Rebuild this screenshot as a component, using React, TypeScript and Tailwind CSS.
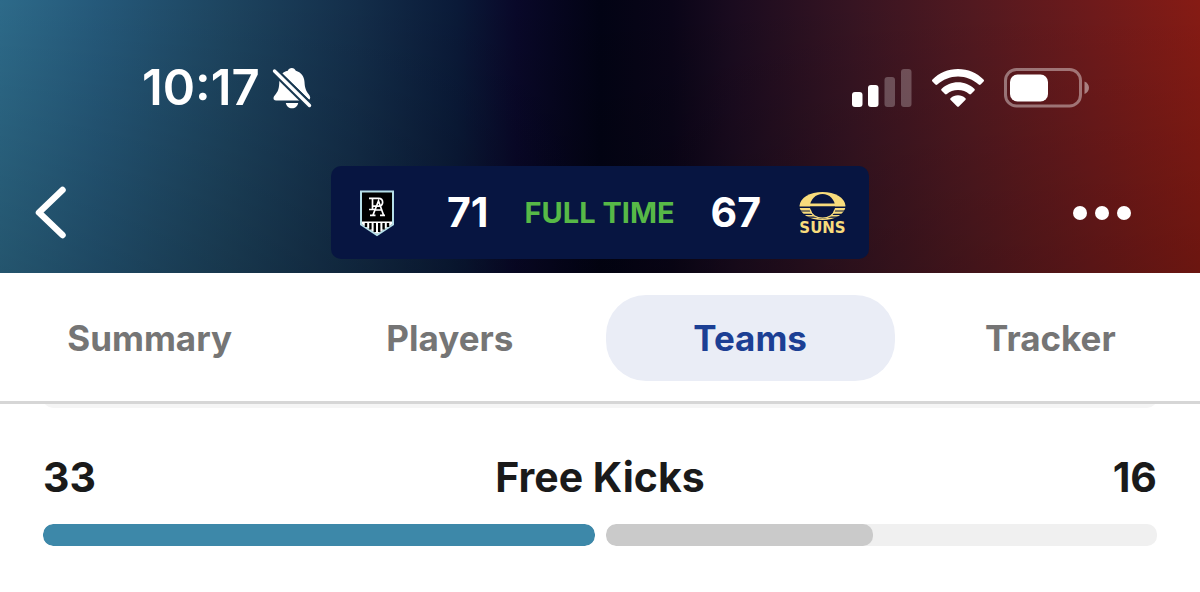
import React, { useState } from 'react';

interface StatRowProps {
  label: string;
  home: number;
  away: number;
}

const TABS = ['Summary', 'Players', 'Teams', 'Tracker'];

const BellOffIcon = () => (
  <svg viewBox="0 0 40 42" className="w-10 h-[42px]" fill="#fff" aria-hidden="true">
    <path d="M10.200 6.500C12.500 4.800 14.500 4.200 15.800 3.800C16.500 2 18 1 19.800 1s3.300 1.100 4 2.800c5.200 1.500 8.400 5.400 8.700 11.200c.3 6 1.500 8.800 4.200 12.200c.8 1 1.300 2 1.500 3.300c0 1-.3 1.700-1 2.200z" />
    <path d="M7.300 11.300L28.800 33.400H4C2.300 33.400 1.500 32.500 1.500 31.200c0-1.600 1.200-2.800 2.500-4.400c2.400-3 3.200-6.300 3.300-12z" />
    <path d="M13.800 36h12.400c-.4 3-3 5.300-6.200 5.300s-5.800-2.300-6.200-5.300z" />
    <path d="M3 4.500L37.500 38.500" stroke="#173851" strokeWidth="7.500" />
    <path d="M2.500 4L37.500 38.500" stroke="#fff" strokeWidth="3.400" strokeLinecap="round" />
  </svg>
);

const SignalIcon = () => (
  <svg viewBox="0 0 60 38" className="w-[60px] h-[38px]" fill="#fff" aria-label="Signal">
    <rect x="0" y="23" width="10.500" height="15" rx="3" />
    <rect x="16" y="16" width="10.500" height="22" rx="3" />
    <rect x="32.500" y="8" width="10.500" height="30" rx="3" opacity="0.250" />
    <rect x="49" y="0" width="10.500" height="38" rx="3" opacity="0.250" />
  </svg>
);

const WifiIcon = () => (
  <svg viewBox="0 0 52 38" className="w-[52px] h-[38px]" fill="#fff" aria-label="Wi-Fi">
    <path d="M26 0C36 0 45 4 51.500 10.500c.7.7.7 1.300.1 2l-3 3.100c-.6.6-1.200.6-1.900 0C41 10.600 34 7.500 26 7.500S11 10.600 5.300 15.600c-.7.6-1.300.6-1.900 0l-3-3.100c-.6-.7-.6-1.300.1-2C7 4 16 0 26 0z" />
    <path d="M26 13.300c6.300 0 12 2.400 16.300 6.500c.7.7.7 1.300 0 2l-3.300 3.300c-.6.6-1.200.6-1.900 0C34.200 22.500 30.400 21 26 21s-8.200 1.500-11.100 4.100c-.7.6-1.300.6-1.900 0l-3.300-3.300c-.7-.7-.7-1.300 0-2C14 15.700 19.700 13.300 26 13.300z" />
    <path d="M26 26.300c2.800 0 5.200 1 7.200 2.600c.8.700.8 1.300.1 2l-6.200 6.400c-.7.700-1.500.7-2.200 0l-6.200-6.400c-.7-.7-.7-1.300.1-2c2-1.600 4.400-2.600 7.200-2.600z" />
  </svg>
);

const BatteryIcon = () => (
  <svg viewBox="0 0 86 40" className="w-[86px] h-10" aria-label="Battery">
    <rect x="1.500" y="1.500" width="75" height="36.500" rx="11" fill="none" stroke="#fff" strokeOpacity="0.400" strokeWidth="3" />
    <rect x="6" y="6.500" width="38" height="27" rx="7.500" fill="#fff" />
    <path d="M80.500 13.500c2.700 1 4.500 3.500 4.500 6.300s-1.800 5.300-4.500 6.300z" fill="#fff" fillOpacity="0.450" />
  </svg>
);

const PortAdelaideLogo = () => (
  <svg viewBox="0 0 36 48" className="w-9 h-12" aria-label="Port Adelaide">
    <path d="M2 2.500h32v33L18 46L2 35.500z" fill="#000" stroke="#b5dfe8" strokeWidth="2" />
    <path d="M3 32.500h30v2.800L18 45L3 35.300z" fill="#fff" />
    <path d="M7 34v4M11.400 34v6.500M15.800 34v9M20.200 34v9M24.600 34v6.500M29 34v4" stroke="#000" strokeWidth="2.400" />
    <g fill="none" stroke="#fff" strokeWidth="1.700">
      <path d="M10 9.300h9.500c5.500 0 5.500 7.800 0 7.800H13M13.500 9.300v11M10 20.500h6" />
      <path d="M14 26L19.500 12l5 14M16 21h7M11 26.300h5.500M21 26.300h5" />
    </g>
  </svg>
);

const SunsLogo = () => (
  <svg viewBox="0 0 52 44" className="w-[52px] h-11 overflow-visible" aria-label="Gold Coast Suns">
    <ellipse cx="25.500" cy="15" rx="23" ry="14" fill="#f8dc7c" />
    <circle cx="25.500" cy="15.500" r="12.500" fill="#071541" />
    <path d="M13 12.500h25v3H13z" fill="#f8dc7c" />
    <path d="M2 16.200h47" stroke="#071541" strokeWidth="1.400" />
    <path d="M2 20h11.500M37.500 20H49M4 23.300h12M35 23.300h12M8 26.200h12M31 26.200h12" stroke="#071541" strokeWidth="1.200" />
    <path d="M13.200 18.500c2 11.500 22.600 11.500 24.600 0" fill="none" stroke="#f8dc7c" strokeWidth="1.200" />
    <text x="25.500" y="42" textAnchor="middle" fill="#f8dc7c" fontFamily="DejaVu Sans, sans-serif" fontSize="15" fontWeight="700">SUNS</text>
  </svg>
);

const StatRow: React.FC<StatRowProps> = ({ label, home, away }) => {
  const max = Math.max(home, away);

  return (
    <section className="px-[43px] pt-[43px]">
      <div className="grid grid-cols-[1fr_auto_1fr] items-center text-[41px] leading-[52px] font-bold text-[#1a1a1a]">
        <span>{home}</span>
        <h2>{label}</h2>
        <span className="text-right">{away}</span>
      </div>
      <div className="mt-[21px] grid grid-cols-2 gap-[11px]">
        <div className="flex justify-end h-[22px] rounded-[10px] bg-[#f0f0f0] overflow-hidden">
          <div className="rounded-[10px] bg-[#3d88a9]" style={{ width: `${(home / max) * 100}%` }}></div>
        </div>
        <div className="h-[22px] rounded-[10px] bg-[#f0f0f0] overflow-hidden">
          <div className="h-full rounded-[10px] bg-[#cacaca]" style={{ width: `${(away / max) * 100}%` }}></div>
        </div>
      </div>
    </section>
  );
};

const App: React.FC = () => {
  const [activeTab, setActiveTab] = useState('Teams');

  return (
    <div className="min-h-screen bg-white font-[Inter,sans-serif]">
      <header className="pt-[62px] pb-[14px] text-white bg-[linear-gradient(180deg,rgba(0,0,0,0)_0%,rgba(0,0,0,0.2)_100%),linear-gradient(90deg,#2d6a89_0%,#25597a_8%,#1d445f_19%,#132d49_30%,#0a1a38_38%,#090829_43%,#020314_50%,#0a0518_56%,#1a0b1f_61%,#361422_71%,#521920_81%,#6e1a1b_91%,#861b14_100%)]">
        {/* Status bar */}
        <div className="flex items-center justify-between pl-[142px] pr-[110px]">
          <div className="flex items-center gap-3">
            <span className="text-[49px] leading-[52px] font-semibold">10:17</span>
            <BellOffIcon />
          </div>
          <div className="flex items-center gap-5">
            <SignalIcon />
            <WifiIcon />
            <BatteryIcon />
          </div>
        </div>

        {/* Scoreboard */}
        <div className="mt-[52px] grid grid-cols-[1fr_538px_1fr] items-center">
          <button className="justify-self-start pl-8" aria-label="Back">
            <svg viewBox="0 0 38 56" className="w-[38px] h-14" fill="none" stroke="#fff" strokeWidth="6.500" strokeLinecap="round" strokeLinejoin="round">
              <path d="M30.500 5L7 27.500L30.500 50" />
            </svg>
          </button>
          <div className="h-[93px] rounded-[10px] bg-[#071541] grid grid-cols-[1fr_auto_1fr] items-center pl-7 pr-5 text-[41px] font-bold">
            <PortAdelaideLogo />
            <div className="flex items-center gap-9">
              <span>71</span>
              <span className="text-[29px] text-[#57b947]">FULL TIME</span>
              <span>67</span>
            </div>
            <div className="flex justify-end">
              <SunsLogo />
            </div>
          </div>
          <button className="justify-self-end pr-[68px]" aria-label="More options">
            <svg viewBox="0 0 60 16" className="w-[60px] h-4" fill="#fff">
              <circle cx="8" cy="8" r="7" />
              <circle cx="30" cy="8" r="7" />
              <circle cx="52" cy="8" r="7" />
            </svg>
          </button>
        </div>
      </header>

      <nav className="grid grid-cols-4 gap-[11px] px-[5px] pt-[22px] pb-5 border-b-[3px] border-[#d6d6d6]">
        {TABS.map((tab) => (
          <button
            key={tab}
            onClick={() => setActiveTab(tab)}
            className={`h-[86px] rounded-[40px] text-[35px] font-bold ${
              tab === activeTab ? 'bg-[#eaedf6] text-[#1c3f94]' : 'text-[#757575]'
            }`}
          >
            {tab}
          </button>
        ))}
      </nav>

      <main>
        {/* Tail of the row scrolled under the tabs */}
        <div className="mx-[43px] h-1 flex flex-col justify-end overflow-hidden">
          <div className="h-[22px] shrink-0 rounded-[10px] bg-[#f5f5f5]"></div>
        </div>
        <StatRow label="Free Kicks" home={33} away={16} />
      </main>
    </div>
  );
};

export default App;
